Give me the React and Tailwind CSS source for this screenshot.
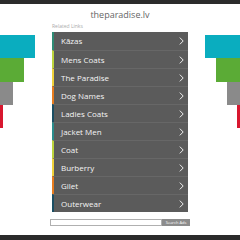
import React from 'react';

const links = [
    { label: 'Kāzas', color: 'border-[#2e8b74]' },
    { label: 'Mens Coats', color: 'border-[#bcd43c]' },
    { label: 'The Paradise', color: 'border-[#f0d23a]' },
    { label: 'Dog Names', color: 'border-[#e87c1e]' },
    { label: 'Ladies Coats', color: 'border-[#1b4e63]' },
    { label: 'Jacket Men', color: 'border-[#2a8c8c]' },
    { label: 'Coat', color: 'border-[#bcd43c]' },
    { label: 'Burberry', color: 'border-[#f0d23a]' },
    { label: 'Gilet', color: 'border-[#e87c1e]' },
    { label: 'Outerwear', color: 'border-[#1b4e63]' },
];

const Chevron = () => (
    <svg width="5" height="8" viewBox="0 0 5 8" fill="none">
        <path d="M0.8 0.6 L4.2 4 L0.8 7.4" stroke="#ffffff" strokeWidth="0.9" />
    </svg>
);

const Bars = ({ side }) => {
    const align = side === 'left' ? 'items-start' : 'items-end';
    return (
        <div className={`w-[50px] flex flex-col pt-[31px] ${align}`}>
            <div className="w-[35px] h-[23px] bg-[#0aadbf]" />
            <div className="w-[24px] h-[24px] bg-[#5bab36]" />
            <div className="w-[13px] h-[23px] bg-[#8a8a8a]" />
            <div className="w-[3px] h-[23px] bg-[#d8172f]" />
        </div>
    );
};

export default function App() {
    return (
        <div className="w-[240px] h-[240px] bg-white flex flex-col overflow-hidden font-['Open_Sans',sans-serif]">
            <div className="h-[4px] bg-[#2b2b2b]" />
            <div className="flex flex-1">
                <Bars side="left" />
                <div className="w-[140px] flex flex-col">
                    <div className="mt-[4px] h-[14px] text-center text-[9px] leading-[14px] text-[#666]">
                        theparadise.lv
                    </div>
                    <div className="h-[8px] px-[2px] text-[5px] leading-[8px] text-[#aaa]">Related Links</div>
                    <div className="mx-[2px] mt-[2px] bg-[#5b5b5b]">
                        {links.map((l, i) => (
                            <div
                                key={l.label}
                                className={`h-[18px] flex items-center justify-between border-l-2 ${l.color} pl-[7px] pr-[4px] ${i > 0 ? 'border-t border-t-[#676767]' : ''}`}
                            >
                                <span className="text-[8px] text-[#f4f4f4] leading-none">{l.label}</span>
                                <Chevron />
                            </div>
                        ))}
                    </div>
                    <div className="mt-[7px] flex h-[7px]">
                        <div className="w-[112px] border border-[#b0b0b0] bg-white" />
                        <div className="flex-1 bg-[#8c8c8c] flex items-center justify-center text-[4px] text-white">
                            Search Ads
                        </div>
                    </div>
                </div>
                <Bars side="right" />
            </div>
            <div className="h-[5px] bg-[#2b2b2b]" />
        </div>
    );
}
